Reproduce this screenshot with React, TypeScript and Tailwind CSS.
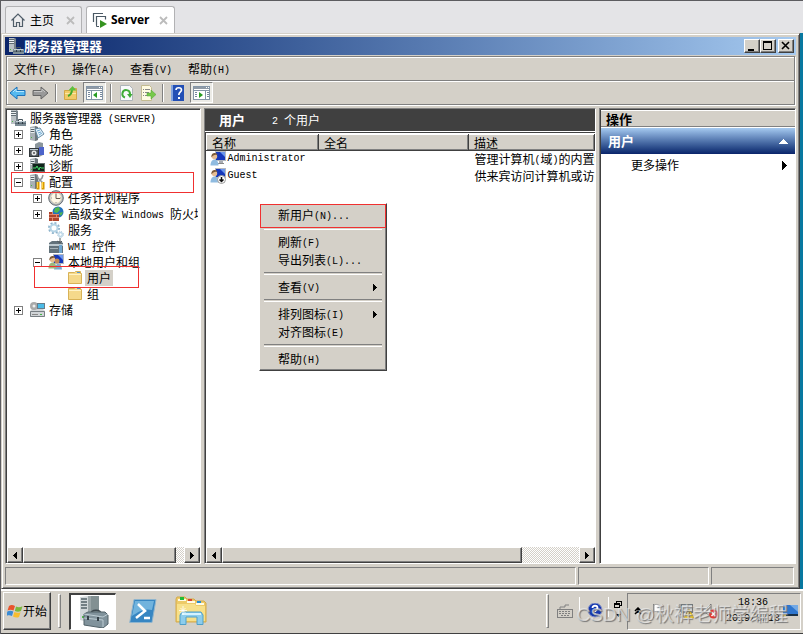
import React from 'react';

const FONT = "font-['Noto_Sans_CJK_SC',sans-serif]";
const RAISED = 'border border-t-white border-l-white border-r-[#404040] border-b-[#404040] bg-[#d4d0c8] shadow-[inset_-1px_-1px_0_#808080]';
const SUNKEN = 'border border-t-[#808080] border-l-[#808080] border-r-white border-b-white';

// Latin runs are half the width of a Chinese character
const Txt = ({ children }: { children: string }) => (
  <>
    {children.split(/([\x20-\x7e]+)/).map((part, i) =>
      /^[\x20-\x7e]/.test(part) ? <span key={i} className="align-[1px] font-['Liberation_Mono',monospace] text-[10px] leading-none">{part}</span> : part
    )}
  </>
);

type IconProps = { className?: string };

const Svg = ({ className = 'size-4', box = '0 0 16 16', children }: { className?: string; box?: string; children: React.ReactNode }) => (
  <svg className={`${className} shrink-0`} viewBox={box} fill="none" aria-hidden="true">{children}</svg>
);

const Tower = () => (
  <>
    <path d="M1 1l5-1 3 1v13l-3 1-5-1z" fill="#a9b1b5" />
    <path d="M6 0l3 1v13l-3 1z" fill="#6d777d" />
    <path d="M1.500 2.500h4M1.500 4.500h4M1.500 6.500h4" stroke="#e9eef0" />
    <path d="M2 3.500h3M2 5.500h3" stroke="#59646a" />
    <path d="M2 11h1v1h-1z" fill="#4cb748" />
  </>
);

const ServerIcon = ({ className }: IconProps) => (
  <Svg className={className}>
    <path d="M1 0h5l2 1v13H1z" fill="#b9c0c4" /><path d="M6 0l2 1v13H6z" fill="#77828a" />
    <path d="M1 1.500h5M1 3.500h5M1 5.500h5" stroke="#5f6b72" />
    <path d="M1 2.500h5M1 4.500h5" stroke="#edf1f3" />
    <path d="M2 11h1v1h-1z" fill="#4cb748" />
    <path d="M8.500 11V9.500h4V11" stroke="#45535c" />
    <path d="M5 11h11v5H5z" fill="#7d8d97" /><path d="M6 11.500h9" stroke="#c3ced5" />
    <path d="M5 13.500h11" stroke="#5a6973" />
    <path d="M8 12h1v2h-1zM12 12h1v2h-1z" fill="#2f3c45" />
  </Svg>
);

const RoleIcon = () => (
  <Svg><Tower /><path d="M6 3l5-1 4 6-6 4z" fill="#e4f1fa" stroke="#668ca6" /><path d="M8 5l3-1M9 7l3-1M10 9l3-2" stroke="#6eaad2" /></Svg>
);

const FeatureIcon = () => (
  <Svg>
    <path d="M6 2l4-2 4 1v12l-4 2-4-2z" fill="#8b969c" /><path d="M10 5h5v8h-5z" fill="#4d64ca" />
    <rect x=".5" y="6.500" width="9" height="8" fill="#53595d" stroke="#2f3538" /><path d="M1 7.500h8" stroke="#bac8d0" />
    <circle cx="5" cy="11" r="2.500" fill="#e7e9e9" /><circle cx="5" cy="11" r="1" fill="#555" />
  </Svg>
);

const DiagnosticsIcon = () => (
  <Svg>
    <Tower /><rect x="3.500" y="5.500" width="12" height="8" fill="#10251c" stroke="#65706f" />
    <path d="M4 10h3l1-2 2 4 1-3 1 1h3" stroke="#43d96a" />
  </Svg>
);

const ConfigIcon = () => (
  <Svg>
    <Tower />
    <path d="M8 1l1 3 5 5M14 1l-1 3-5 5" stroke="#8f969b" strokeWidth="1.500" />
    <path d="M9 8v7.500M14 8v7.500" stroke="#d99a00" strokeWidth="3" /><path d="M8.500 8v6M13.500 8v6" stroke="#ffd447" />
  </Svg>
);

const ClockIcon = () => (
  <Svg>
    <circle cx="8" cy="8" r="7.300" fill="#b7bcc0" stroke="#666d72" /><circle cx="8" cy="8" r="5.300" fill="#fff8e7" stroke="#e5dcc3" />
    <path d="M8 4v4.500h4" stroke="#685d51" /><path d="M8 3v1M8 12v1M3 8h1M12 8h1" stroke="#999" />
  </Svg>
);

const FirewallIcon = () => (
  <Svg>
    <circle cx="10" cy="6" r="5.500" fill="#2372bd" /><path d="M7 2l4-1 1 3-3 3-3-1zM11 7l4-1-2 4z" fill="#52b84c" />
    <path d="M1 6h3v2h7v7H1z" fill="#ad432b" /><path d="M1 8.500h10M1 11.500h10M4.500 6v3M8.500 9v3M4.500 12v3" stroke="#df876d" />
  </Svg>
);

const GearsIcon = () => (
  <Svg>
    <circle cx="6" cy="6" r="5" stroke="#8fb4cc" strokeWidth="2" strokeDasharray="2 1.900" />
    <circle cx="6" cy="6" r="3.500" stroke="#b5d4e6" strokeWidth="2" />
    <circle cx="12.500" cy="12.500" r="2.800" stroke="#8fb4cc" strokeDasharray="1.200 1" /><circle cx="12.500" cy="12.500" r="1.800" stroke="#b5d4e6" strokeWidth="1.200" />
  </Svg>
);

const WmiIcon = () => (
  <Svg>
    <path d="M1 5l3-2h8l3 2v10H1z" fill="#62727b" /><path d="M1 6h14v2H1z" fill="#bdc9cf" /><path d="M2 10.500h8" stroke="#a5b1b7" />
    <path d="M12 0v5M9 3l3 2 2-2" stroke="#545c61" /><path d="M12.500 7v8" stroke="#6fa6cf" strokeWidth="3" />
  </Svg>
);

const UserIcon = ({ disabled = false, group = false }: { disabled?: boolean; group?: boolean }) => (
  <Svg>
    <rect x="5.500" y=".5" width="10" height="9" fill="#1537ba" stroke="#b4b8c0" /><path d="M10 1h5v5z" fill="#6b96ec" />
    <path d="M9 10h4v2H9z" fill="#a9adb2" /><path d="M8 12h6v1H8z" fill="#888" />
    {group && <><circle cx="9" cy="7" r="2.500" fill="#c08a58" /><path d="M6 15.500c0-7 8-7 8 0z" fill="#79a8cf" /></>}
    <circle cx="4.500" cy="5.500" r="2.700" fill="#e6bd93" /><path d="M1.500 6.500C.5 1 7.500 1 7.500 4 5 3.200 3 4 1.500 6.500z" fill="#7a5a3a" />
    <path d="M.5 14.500c0-8 8-8 8 0z" fill={group ? '#9db87b' : '#8fbbe0'} />
    {disabled && <><circle cx="11.500" cy="11.500" r="4" fill="#fff" stroke="#999" /><path d="M11.500 9v4.500M9.500 11.500l2 2 2-2" stroke="#111" strokeWidth="1.500" /></>}
  </Svg>
);

const FolderIcon = () => (
  <Svg><path d="M1.500 13.500v-11h6l1-1h5v2h1v10z" fill="#f5d98b" stroke="#d8b257" /><path d="M2 4.500h12" stroke="#fff3c8" /><path d="M10 2.500h3" stroke="#5297d2" /></Svg>
);

const StorageIcon = () => (
  <Svg>
    <path d="M1 9l2-2h11l2 2v6H1z" fill="#d1d5d8" /><path d="M1.500 9.500h14v5h-14z" stroke="#777e83" /><path d="M3 12.500h6" stroke="#888" />
    <circle cx="5" cy="4" r="4" fill="#aaa" /><circle cx="5" cy="4" r="1.500" fill="#eee" /><rect x="8.500" y="1.500" width="7" height="5" fill="#4bbbe7" stroke="#667d8b" />
    <path d="M11 12h2v1h-2z" fill="#42b545" />
  </Svg>
);

const ArrowIcon = ({ back = false }: { back?: boolean }) => (
  <Svg className="h-4 w-[17px]" box="0 0 17 16">
    {back
      ? <path d="M1 8l7-6v3.500h8v5H8V14z" fill="#56b9ef" stroke="#1d72ba" />
      : <path d="M16 8L9 2v3.500H1v5h8V14z" fill="#999" stroke="#666" />}
    <path d={back ? 'M4 7l3-3v2.500h8' : 'M2 6.500h8V4l3 3'} stroke={back ? '#b5e7ff' : '#c4c4c4'} />
  </Svg>
);

const UpFolderIcon = () => (
  <Svg><path d="M1.500 14.500V5.500h5l1-2h6v11z" fill="#f1ca68" stroke="#d3a746" /><path d="M2 8.500h11" stroke="#fbe7a6" /><path d="M5 11c3-1 4-3 4-7" stroke="#43a82d" strokeWidth="2" /><path d="M5.500 5.500L9.500 1l4 4.500z" fill="#5cc03f" /></Svg>
);

const PaneIcon = ({ right = false }: { right?: boolean }) => (
  <Svg className="h-4 w-[17px]" box="0 0 17 16">
    <g shapeRendering="crispEdges">
      <rect x=".5" y="1.500" width="16" height="13" fill="#fff" stroke="#8495a7" />
      <path d="M1 3h15" stroke="#8f9aa6" strokeWidth="2" /><path d="M13 2h1v1h-1zM15 2h1v1h-1z" fill="#fff" />
      <path d={right ? 'M12.500 5v9' : 'M5.500 5v9'} stroke="#8495a7" /><path d="M1 5.500h15" stroke="#8495a7" />
      <path d={right ? 'M13.500 7h2M13.500 9h2M13.500 11h2M2 7.500h2M2 9.500h2M2 11.500h2' : 'M2 7.500h2M2 9.500h2M2 11.500h2M14 7.500h2M14 9.500h2M14 11.500h2'} stroke="#75879b" />
    </g>
    <path d={right ? 'M6 7v6l4-3z' : 'M11 7v6l-4-3z'} fill="#299c22" />
  </Svg>
);

const RefreshIcon = () => (
  <Svg><path d="M2.500.5h9l3 3v12h-12z" fill="#f8fafb" stroke="#aeb4b9" /><path d="M7 12.500A3.800 3.800 0 1 1 12 9" stroke="#3eac37" strokeWidth="2" /><path d="M9 9h5.500L12 13z" fill="#3eac37" /></Svg>
);

const ExportIcon = () => (
  <Svg><path d="M1.500.5h8l2 2v13h-10z" fill="#fffbe2" stroke="#c3bb91" /><path d="M3 4.500h1M5 4.500h5M3 7.500h1M5 7.500h4M3 10.500h1M5 10.500h2" stroke="#888" /><path d="M7 8h4V5l5 4.500-5 4.500v-3H7z" fill="#76c84a" stroke="#4fa431" strokeWidth=".5" /></Svg>
);

const HelpIcon = () => (
  <Svg><path d="M1 0h13v16H1z" fill="#234fb5" /><path d="M1 0h2v16H1z" fill="#82a3df" /><path d="M6 5c0-3 5.500-3 5.500 0 0 2-2.700 2-2.700 5" stroke="#fff" strokeWidth="1.600" /><path d="M8 12h2v2H8z" fill="#fff" /></Svg>
);

const Tri = ({ dir }: { dir: 'left' | 'right' }) => (
  <svg className="h-[7px] w-1 shrink-0" viewBox="0 0 4 7" shapeRendering="crispEdges" aria-hidden="true">
    <path d={dir === 'left' ? 'M4 0v7L0 3.500z' : 'M0 0v7l4-3.500z'} fill="#000" />
  </svg>
);

const StartFlag = () => (
  <Svg className="size-4">
    <path d="M2 3c2-1.500 4-1 6 0L6.500 7.500c-2-1-4-1-6 0z" fill="#e9532c" /><path d="M9 3.500c2 1 4 1 6.500-.2L14 8c-2 1-4 1-6.200 0z" fill="#7bb83b" />
    <path d="M.3 8.500c2-1 4-1 6 0L5 13c-2-1-4-1-5.500 0z" fill="#398bd5" /><path d="M7.400 9c2 1 4 1 6.200.200L12 14c-2 1-4 .7-6-.500z" fill="#f7bd2e" />
  </Svg>
);

const BigServer = () => (
  <Svg className="size-8" box="0 0 32 32">
    <path d="M3 1l8-1v26l-8-2z" fill="#d2d8da" /><path d="M11 0h11v27H11z" fill="#9aa5a7" /><path d="M14 0h8v27h-8z" fill="#829092" />
    <path d="M4 3h6M4 6h6M4 9h6M4 12h6" stroke="#536268" strokeWidth="1.500" /><path d="M5 20h2v2H5z" fill="#51ba4b" />
    <path d="M14 18c0-5 10-5 10 0" stroke="#3b464c" strokeWidth="1.500" />
    <path d="M7 18l4-2h17l3 3v9l-5 4-19-3z" fill="#81939c" stroke="#526269" /><path d="M7 18l19 3 5-3M7 22l19 2v7" stroke="#bdccd3" />
    <path d="M10 20h2v4h-2zM20 21h2v4h-2z" fill="#354148" />
  </Svg>
);

const PowerShell = () => (
  <Svg className="h-6 w-7" box="0 0 28 24">
    <path d="M5 .5h22L23 23.500H.7z" fill="#3786c2" stroke="#8fb5ce" /><path d="M6 2h19l-2 9C15 9 9 13 3 17z" fill="#71b3dd" />
    <path d="M9 5l7 7-9 7M15 19h6" stroke="#fff" strokeWidth="2.500" />
  </Svg>
);

const Explorer = () => (
  <Svg className="size-8" box="0 0 32 32">
    <path d="M1 27V4l1-2h8l2 2h7l2 2h8l2 2v19z" fill="#edca68" stroke="#d3aa4a" />
    <path d="M3 5h8M12 7h8M21 9h8" stroke="#fffbe6" strokeWidth="2" /><path d="M2 9h18l1 2h9v15H2z" fill="#f7e08a" />
    <path d="M5 2h4v3H5z" fill="#20bb38" /><path d="M13 4h4v2h-4z" fill="#d9452d" /><path d="M22 6h4v2h-4z" fill="#238bd0" />
    <path d="M5 29.500V20l2-3h19l2 3v9.500h-6V22H11v7.500z" fill="#8dcdec" stroke="#4e9fc9" /><path d="M7 19h19" stroke="#d5f3ff" strokeWidth="2" />
    <path d="M8 11v9M4 15.500h8M5.500 13l5 5M10.500 13l-5 5" stroke="#fff" strokeWidth=".8" />
  </Svg>
);

const tree = [
  { label: '角色', icon: <RoleIcon />, level: 1, mark: '+' },
  { label: '功能', icon: <FeatureIcon />, level: 1, mark: '+' },
  { label: '诊断', icon: <DiagnosticsIcon />, level: 1, mark: '+' },
  { label: '配置', icon: <ConfigIcon />, level: 1, mark: '-' },
  { label: '任务计划程序', icon: <ClockIcon />, level: 2, mark: '+' },
  { label: '高级安全 Windows 防火墙', icon: <FirewallIcon />, level: 2, mark: '+' },
  { label: '服务', icon: <GearsIcon />, level: 2 },
  { label: 'WMI 控件', icon: <WmiIcon />, level: 2 },
  { label: '本地用户和组', icon: <UserIcon group />, level: 2, mark: '-' },
  { label: '用户', icon: <FolderIcon />, level: 3, selected: true },
  { label: '组', icon: <FolderIcon />, level: 3 },
  { label: '存储', icon: <StorageIcon />, level: 1, mark: '+' },
];

const indent = ['', 'pl-[7px]', 'pl-[26px]', 'pl-[45px]'];

const menuGroups = [
  [{ label: '新用户(N)...' }],
  [{ label: '刷新(F)' }, { label: '导出列表(L)...' }],
  [{ label: '查看(V)', sub: true }],
  [{ label: '排列图标(I)', sub: true }, { label: '对齐图标(E)' }],
  [{ label: '帮助(H)' }],
];

const ScrollBar = ({ thumb }: { thumb: string }) => (
  <div className="flex h-4 shrink-0 bg-[repeating-conic-gradient(#fff_0_25%,#d4d0c8_0_50%)] bg-[length:2px_2px]">
    <button aria-label="向左滚动" className={`flex w-4 items-center justify-center ${RAISED}`}><Tri dir="left" /></button>
    <div className="flex-1"><div className={`h-full ${thumb} ${RAISED}`} /></div>
    <button aria-label="向右滚动" className={`flex w-4 items-center justify-center ${RAISED}`}><Tri dir="right" /></button>
  </div>
);

const ToolSeparator = () => <span className="h-[18px] w-0.5 border-l border-[#808080] bg-white" />;

const ContextMenu = () => (
  <div role="menu" className={`absolute top-[70px] left-[53px] w-32 p-0.5 ${RAISED}`}>
    {menuGroups.map((group, i) => (
      <React.Fragment key={i}>
        {i > 0 && <hr className="mx-0.5 my-[3px] h-[3px] border-t border-b border-t-[#808080] border-b-white" />}
        {group.map((item) => (
          <button key={item.label} role="menuitem" className="flex h-[18px] w-full items-center justify-between pr-[7px] pl-4">
            <span><Txt>{item.label}</Txt></span>
            {item.sub && <Tri dir="right" />}
          </button>
        ))}
      </React.Fragment>
    ))}
    <div className="pointer-events-none absolute inset-x-0 top-0 h-6 border border-[#f03030]" />
  </div>
);

const TreePane = () => (
  <section className={`relative flex w-[196px] shrink-0 flex-col bg-white ${SUNKEN}`}>
    <div className="flex flex-1 flex-col overflow-hidden border-t border-l border-[#404040]">
      <ul className="mr-0.5 flex-1 overflow-hidden leading-4 whitespace-nowrap">
        <li className="flex h-4 gap-1 pl-[3px]"><ServerIcon /><span><Txt>服务器管理器 (SERVER)</Txt></span></li>
        {tree.map((n) => (
          <li key={n.label} className={`flex h-4 items-center ${indent[n.level]}`}>
            {n.mark ? (
              <button aria-label={n.mark === '+' ? '展开' : '折叠'} className="mr-1.5 size-[9px] shrink-0 border border-[#808080] bg-white">
                <svg viewBox="0 0 7 7" className="size-full" shapeRendering="crispEdges">
                  <path d={n.mark === '+' ? 'M1 3h5v1H1zM3 1h1v5H3z' : 'M1 3h5v1H1z'} />
                </svg>
              </button>
            ) : (
              <span className="mr-1.5 w-[9px] shrink-0" />
            )}
            {n.icon}
            <span className={n.selected ? 'ml-0.5 bg-[#d4d0c8] px-0.5' : 'ml-1'}><Txt>{n.label}</Txt></span>
          </li>
        ))}
      </ul>
      <ScrollBar thumb="w-[95%]" />
    </div>
    <div className="pointer-events-none absolute top-[63px] left-[5px] h-[21px] w-[183px] border border-[#f03030]" />
    <div className="pointer-events-none absolute top-[157px] left-7 h-[22px] w-[105px] border border-[#f03030]" />
  </section>
);

const UserPane = () => (
  <section className={`flex min-w-0 flex-1 flex-col bg-white ${SUNKEN}`}>
    <header className="flex h-[22px] shrink-0 items-center bg-[#404040] pl-3.5 text-white">
      <h1 className="text-[13px] font-bold">用户</h1>
      <span className="ml-[27px]"><Txt>2 个用户</Txt></span>
    </header>
    <div className="relative mt-px flex flex-1 flex-col overflow-hidden border-t border-l border-[#404040] pt-px">
      <table className="w-full table-fixed text-left">
        <colgroup><col className="w-[112px]" /><col className="w-[150px]" /><col /></colgroup>
        <thead>
          <tr>
            {['名称', '全名', '描述'].map((h) => (
              <th key={h} className={`h-4 p-0 pl-[5px] leading-[14px] font-normal ${RAISED}`}>{h}</th>
            ))}
          </tr>
        </thead>
        <tbody>
          {[
            ['Administrator', '管理计算机(域)的内置帐户'],
            ['Guest', '供来宾访问计算机或访问域的内置帐户'],
          ].map(([name, desc]) => (
            <tr key={name} className="h-[17px] leading-4 whitespace-nowrap">
              <td className="p-0"><div className="flex items-center gap-0.5 pl-[3px]"><UserIcon disabled={name === 'Guest'} /><Txt>{name}</Txt></div></td>
              <td />
              <td className="overflow-hidden p-0 pl-1.5"><Txt>{desc}</Txt></td>
            </tr>
          ))}
        </tbody>
      </table>
      <div className="flex-1" />
      <ScrollBar thumb="w-[84%]" />
      <ContextMenu />
    </div>
  </section>
);

const ActionPane = () => (
  <aside className={`flex w-[197px] shrink-0 flex-col bg-white ${SUNKEN}`}>
    <div className="flex-1 border-t border-l border-[#404040]">
      <h2 className="h-[17px] border-t border-b border-t-white border-b-[#808080] bg-[#d4d0c8] pl-[5px] text-[13px] leading-[15px] font-bold">操作</h2>
      <button className="mt-px flex h-[26px] w-full items-center justify-between bg-linear-to-b from-[#a6caf0] to-[#0a246a] pr-[7px] pl-[7px] text-[13px] font-bold text-white">
        用户
        <svg className="h-[5px] w-[9px]" viewBox="0 0 9 5" shapeRendering="crispEdges" aria-hidden="true"><path d="M0 5h9L4.500 0z" fill="#fff" /></svg>
      </button>
      <button className="flex h-[22px] w-full items-center justify-between pr-2 pl-[30px]">
        更多操作
        <svg className="h-[9px] w-[5px]" viewBox="0 0 5 9" shapeRendering="crispEdges" aria-hidden="true"><path d="M0 0v9l5-4.500z" /></svg>
      </button>
    </div>
  </aside>
);

const Taskbar = () => (
  <footer className="relative flex h-[45px] shrink-0 items-center border-b border-[#404040] bg-[#d4d0c8] pr-[2px] pl-0.5 shadow-[inset_0_2px_0_#fff]">
    <button className={`flex h-[38px] w-12 items-center justify-center ${RAISED}`}><StartFlag />开始</button>
    <span className="ml-[7px] h-[34px] w-[3px] border border-t-white border-r-[#808080] border-b-[#808080] border-l-white" />
    <button aria-label="服务器管理器" className="ml-2 flex h-[37px] w-[47px] items-center justify-center border-t-2 border-r border-b border-l-2 border-t-[#404040] border-r-white border-b-white border-l-[#404040] bg-white"><BigServer /></button>
    <button aria-label="Windows PowerShell" className="ml-[13px]"><PowerShell /></button>
    <button aria-label="资源管理器" className="ml-[18px]"><Explorer /></button>
    <span className="ml-auto h-[34px] w-[3px] border border-t-white border-r-[#808080] border-b-[#808080] border-l-white" />
    <Svg className="ml-2 size-4">
      <rect x=".5" y="6.500" width="15" height="8" fill="#d4d0c8" stroke="#808080" /><path d="M3 6V4h5V2h4" stroke="#808080" />
      <path d="M2 8.500h12M2 10.500h12M4 12.500h8" stroke="#808080" strokeDasharray="2 1" />
    </Svg>
    <span className="mt-2 ml-1.5 h-5 w-px self-start bg-white" />
    <Svg className="ml-[7px] size-4">
      <circle cx="8" cy="7" r="7" fill="#1538ae" stroke="#8a96c8" /><path d="M5.500 5c0-3 5-3 5 0 0 2-2.500 2-2.500 4M8 10.500v1.500" stroke="#fff" strokeWidth="1.800" />
    </Svg>
    <span className="mt-2 ml-[5px] h-5 w-px self-start bg-white" />
    <Svg className="ml-1 h-5 w-2.5" box="0 0 10 20">
      <path d="M3.500 3V.5h5v4h-2M1.500 2.500h5v4h-5zM1.500 3h5" stroke="#000" shapeRendering="crispEdges" /><path d="M3 13h5l-2.500 3z" fill="#000" />
    </Svg>
    <div className={`ml-1 flex h-[37px] w-[174px] items-center pr-0.5 pl-1.5 ${SUNKEN}`}>
      <Svg className="size-2" box="0 0 8 8"><path d="M1 4l3-3 3 3M1 7l3-3 3 3" stroke="#000" strokeWidth="1.500" /></Svg>
      <Svg className="ml-2 size-4"><path d="M3.500 1v14" stroke="#808080" /><path d="M4 2c4-2 5 2 9 0v7c-4 2-5-2-9 0z" fill="#fff" stroke="#9a9a9a" /></Svg>
      <Svg className="ml-3 size-4"><rect x="3.500" y="1.500" width="11" height="8" fill="#c4cacd" stroke="#73797c" /><path d="M2 1v7h3v6" stroke="#777" /><path d="M11 6l5 9H6z" fill="#f6cf24" stroke="#b28b0c" strokeWidth=".5" /><path d="M11 9v3M11 13v1" stroke="#222" /></Svg>
      <Svg className="ml-2 size-4"><path d="M1 6h3l5-5v13l-5-4H1z" fill="#eee" stroke="#777" /><circle cx="11.500" cy="11" r="4.500" fill="#e13b34" /><path d="M9.500 9l4 4M13.500 9l-4 4" stroke="#fff" strokeWidth="1.500" /></Svg>
      <time className="ml-auto text-center font-['Liberation_Mono',monospace] text-[10px]">18:36<br />2019/8/13</time>
      <Svg className="ml-0.5 size-4"><path d="M1 2h15v10H1z" fill="#2f76ce" /><path d="M8 2h8v7z" fill="#73a9e5" /><path d="M3 11h13v2H3z" fill="#1b3146" /><path d="M1 11h3v2H1z" fill="#f1d64c" /></Svg>
    </div>
    <p className="pointer-events-none absolute right-[15px] bottom-1 font-['Liberation_Sans','Noto_Sans_CJK_SC',sans-serif] text-[19px] leading-7 whitespace-nowrap text-[#f4f4f4]/60 [text-shadow:1px_1px_1px_#777777]">CSDN @秋裤老师学编程</p>
  </footer>
);

const App: React.FC = () => (
  <div className={`flex min-h-screen w-full flex-col border-t border-l border-[#5c5c60] bg-[#e4e4e7] text-[12px] leading-4 text-black ${FONT}`}>
    <nav className="flex h-8 shrink-0 items-end gap-1 pl-1">
      <button className="flex h-[27px] w-[77px] items-center rounded-t-[3px] border border-b-0 border-[#b2b2b4] bg-[#ececee] pl-1">
        <Svg className="size-4"><path d="M1.500 8.500L8 2l6.500 6.500M3.500 7v7.500h3v-4h3v4h3V7" stroke="#505d69" strokeWidth="1.200" /></Svg>
        <span className="ml-1">主页</span>
        <span className="ml-auto pr-1.5"><Svg className="size-[9px]" box="0 0 9 9"><path d="M1 1l7 7M8 1L1 8" stroke="#bcbcbc" strokeWidth="1.800" /></Svg></span>
      </button>
      <button className="flex h-[27px] w-[89px] items-center rounded-t-[3px] border border-b-0 border-[#b2b2b4] bg-white pl-[5px]">
        <Svg className="size-4"><path d="M1.500 10V1.500H11M4.500 13V4.500h9v3" stroke="#4b5964" strokeWidth="1.200" /><path d="M4.500 12v2.500H7" stroke="#4b5964" /><path d="M8 8v8l7-4z" fill="#35931f" /></Svg>
        <span className="ml-[3px] font-['Open_Sans',sans-serif] font-bold">Server</span>
        <span className="ml-auto pr-1.5"><Svg className="size-[9px]" box="0 0 9 9"><path d="M1 1l7 7M8 1L1 8" stroke="#bcbcbc" strokeWidth="1.800" /></Svg></span>
      </button>
    </nav>

    <div className="flex flex-1 bg-[#0878a0] pr-[3px]">
      <main className="flex min-w-0 flex-1 flex-col gap-[3px] border border-t-[#d4d0c8] border-r-[#404040] border-b-[#404040] border-l-[#d4d0c8] bg-[#d4d0c8] p-[3px] shadow-[inset_1px_1px_0_#fff,inset_-1px_-1px_0_#808080]">
        <div className="flex flex-col gap-px">
          <div className="flex h-[18px] items-center bg-linear-to-r from-[#0a246a] to-[#a6caf0] pr-0.5 pl-[3px] text-[13px] font-bold text-white">
            <ServerIcon />
            <span className="flex-1">服务器管理器</span>
            <button aria-label="最小化" className={`h-3.5 w-4 ${RAISED}`}><Svg className="h-3 w-3.5" box="0 0 14 12"><path d="M3 9h6v2H3z" fill="#000" /></Svg></button>
            <button aria-label="最大化" className={`h-3.5 w-4 ${RAISED}`}><Svg className="h-3 w-3.5" box="0 0 14 12"><path d="M2 1h9v9H2zM3 3v6h7V3z" fill="#000" fillRule="evenodd" /></Svg></button>
            <button aria-label="关闭" className={`ml-0.5 h-3.5 w-4 ${RAISED}`}><Svg className="h-3 w-3.5" box="0 0 14 12"><path d="M3 2l7 7M10 2L3 9" stroke="#000" strokeWidth="1.600" /></Svg></button>
          </div>
          <div className="mx-px border border-[#808080] shadow-[1px_1px_0_#fff,inset_1px_1px_0_#fff]">
            <div className="flex h-[23px] items-center gap-4 pl-[7px]">
              {['文件(F)', '操作(A)', '查看(V)', '帮助(H)'].map((m) => (
                <button key={m}><Txt>{m}</Txt></button>
              ))}
            </div>
            <div className="flex h-6 items-center border-t border-[#808080] pl-[2px] shadow-[inset_0_1px_0_#fff]">
              <button aria-label="后退"><ArrowIcon back /></button>
              <button aria-label="前进" className="ml-1.5"><ArrowIcon /></button>
              <span className="ml-1.5 flex"><ToolSeparator /></span>
              <button aria-label="上一级" className="ml-1.5"><UpFolderIcon /></button>
              <button aria-label="显示控制台树" className={`ml-1 flex h-[21px] w-[23px] items-center justify-center bg-[#ecebe6] ${SUNKEN}`}><PaneIcon /></button>
              <span className="ml-1 flex"><ToolSeparator /></span>
              <button aria-label="刷新" className="ml-1.5"><RefreshIcon /></button>
              <button aria-label="导出列表" className="ml-1.5"><ExportIcon /></button>
              <span className="ml-1.5 flex"><ToolSeparator /></span>
              <button aria-label="帮助" className="ml-1.5"><HelpIcon /></button>
              <button aria-label="显示操作窗格" className={`ml-1 flex h-[21px] w-[23px] items-center justify-center bg-[#ecebe6] ${SUNKEN}`}><PaneIcon right /></button>
            </div>
          </div>
        </div>

        <div className="flex flex-1 gap-[3px]">
          <TreePane />
          <UserPane />
          <ActionPane />
        </div>

        <div className="flex h-[18px] shrink-0 gap-0.5 pr-0.5">
          <div className={`flex-1 ${SUNKEN}`} />
          <div className={`w-[131px] ${SUNKEN}`} />
          <div className={`w-[83px] ${SUNKEN}`} />
        </div>
      </main>
    </div>
    <Taskbar />
  </div>
);

export default App;
